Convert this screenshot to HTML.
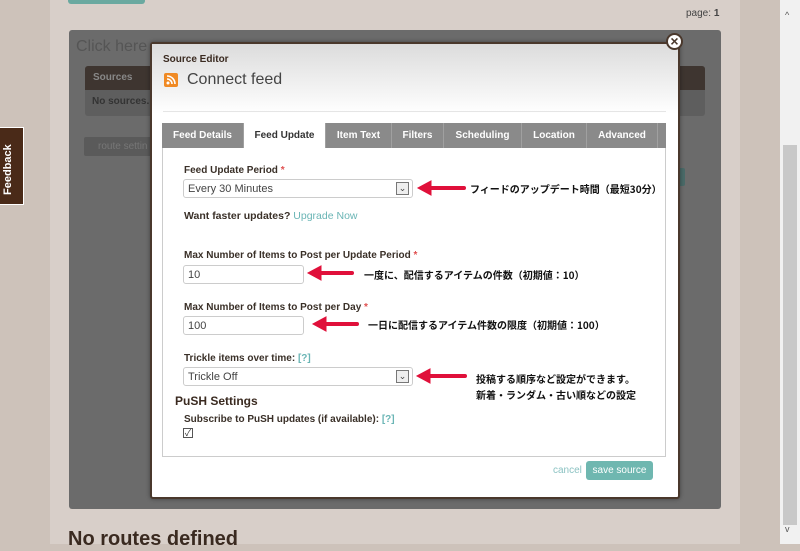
<!DOCTYPE html>
<html><head><meta charset="utf-8"><style>
*{margin:0;padding:0;box-sizing:border-box}
body{width:800px;height:544px;overflow:hidden;position:relative;background:#cdc2ba;font-family:"Liberation Sans","Noto Sans CJK JP",sans-serif;font-size:11px;color:#333}
.a{position:absolute;white-space:nowrap}
.jp{font-family:"Noto Sans CJK JP",sans-serif;font-weight:bold;font-size:10px;color:#111}
.lbl{font-weight:bold;font-size:10px;color:#3a3028}
.req{color:#e05050}
.link{color:#6ab5b5}
.inp{border:1px solid #ccc;border-radius:3px;background:#fff;font-size:11px;color:#444;padding:3px 4px;height:19px}
.dd{position:absolute;right:3px;top:2px;width:13px;height:13px;border:1px solid #777;background:#eee;font-size:9px;line-height:11px;text-align:center}
.tab{position:absolute;top:0;height:25px;line-height:25px;text-align:center;color:#fff;font-weight:bold;font-size:10px;background:#8a8a8a;border-right:1px solid #a0a0a0}
</style></head><body>
<div class="a" style="left:50px;top:0;width:690px;height:544px;background:#d8cfc9"></div>
<div class="a" style="left:780px;top:0;width:20px;height:544px;background:#f1f1f1"></div>
<div class="a" style="left:783px;top:145px;width:14px;height:380px;background:#c8c8c8"></div>
<div class="a" style="left:785px;top:10px;font-size:9px;color:#555">^</div>
<div class="a" style="left:785px;top:524px;font-size:9px;color:#555">v</div>
<div class="a" style="left:68px;top:0;width:77px;height:4px;background:#6aa9a0;border-radius:0 0 3px 3px"></div>
<div class="a" style="left:686px;top:8px;font-size:10px;color:#444">page: <b>1</b></div>
<div class="a" style="left:0;top:127px;width:24px;height:78px;background:#4a2a18;border:1px solid #fff;border-left:none"></div>
<div class="a" style="left:2px;top:195px;transform:rotate(-90deg);transform-origin:0 0;color:#fff;font-weight:bold;font-size:11px;width:70px">Feedback</div>
<div class="a" style="left:69px;top:30px;width:652px;height:479px;background:#6b6b6b;border-radius:3px"></div>
<div class="a" style="left:76px;top:38px;font-size:16px;color:#555">Click here</div>
<div class="a" style="left:85px;top:66px;width:620px;height:50px;background:#5e5e5e;border-radius:3px"></div>
<div class="a" style="left:85px;top:66px;width:620px;height:24px;background:#3e3530;border-radius:3px 3px 0 0"></div>
<div class="a" style="left:93px;top:72px;color:#888;font-weight:bold;font-size:10px">Sources</div>
<div class="a" style="left:92px;top:96px;color:#333;font-weight:bold;font-size:10px">No sources.</div>
<div class="a" style="left:84px;top:137px;width:70px;height:19px;background:#5a5a5a;border-radius:2px;color:#777;font-size:10px;padding:4px 14px;overflow:hidden">route settin</div>
<div class="a" style="left:670px;top:168px;width:15px;height:18px;background:#4a6a68;border-radius:2px"></div>
<div class="a" style="left:68px;top:528px;font-size:20px;font-weight:bold;color:#3a2a20">No routes defined</div>
<div class="a" style="left:150px;top:42px;width:530px;height:457px;background:#fff;border:2px solid #4a382c;border-radius:3px;box-shadow:0 0 4px rgba(0,0,0,.4)">
<div style="position:absolute;left:0;top:0;width:526px;height:70px;background:linear-gradient(#dcdcdc,#fff)"></div>
</div>
<div class="a" style="left:666px;top:33px;width:17px;height:17px;border-radius:50%;background:#fff;border:2px solid #4a382c;text-align:center;line-height:12px;font-weight:bold;font-size:14px;color:#4a382c">×</div>
<div class="a" style="left:163px;top:54px;font-weight:bold;font-size:10px;color:#3a2a20">Source Editor</div>
<div class="a" style="left:164px;top:73px;width:14px;height:14px;background:#f08a24;border-radius:2px"></div>
<svg class="a" style="left:164px;top:73px" width="14" height="14"><circle cx="4" cy="10" r="1.5" fill="#fff"/><path d="M3 6a5 5 0 0 1 5 5M3 3a8 8 0 0 1 8 8" stroke="#fff" stroke-width="1.6" fill="none"/></svg>
<div class="a" style="left:187px;top:71px;font-size:16px;color:#444">Connect feed</div>
<div class="a" style="left:163px;top:111px;width:503px;height:1px;background:#e5e5e5"></div>
<div class="a" style="left:162px;top:123px;width:504px;height:334px;border:1px solid #ccc;background:#fff"></div>
<div class="a" style="left:162px;top:123px;width:504px;height:25px;background:#8a8a8a">
<div class="tab" style="left:0;width:82px">Feed Details</div>
<div class="tab" style="left:82px;width:82px;background:#fff;color:#333">Feed Update</div>
<div class="tab" style="left:164px;width:66px">Item Text</div>
<div class="tab" style="left:230px;width:52px">Filters</div>
<div class="tab" style="left:282px;width:78px">Scheduling</div>
<div class="tab" style="left:360px;width:65px">Location</div>
<div class="tab" style="left:425px;width:71px">Advanced</div>
</div>
<div class="a lbl" style="left:184px;top:165px">Feed Update Period <span class="req">*</span></div>
<div class="a inp" style="left:183px;top:179px;width:230px">Every 30 Minutes<div class="dd">⌄</div></div>
<div class="a lbl" style="left:184px;top:210px;font-size:10.5px">Want faster updates? <span class="link" style="font-weight:normal">Upgrade Now</span></div>
<div class="a lbl" style="left:184px;top:250px">Max Number of Items to Post per Update Period <span class="req">*</span></div>
<div class="a inp" style="left:183px;top:265px;width:121px">10</div>
<div class="a lbl" style="left:184px;top:302px">Max Number of Items to Post per Day <span class="req">*</span></div>
<div class="a inp" style="left:183px;top:316px;width:121px">100</div>
<div class="a lbl" style="left:184px;top:353px">Trickle items over time: <span class="link">[?]</span></div>
<div class="a inp" style="left:183px;top:367px;width:230px">Trickle Off<div class="dd">⌄</div></div>
<div class="a" style="left:175px;top:394px;font-weight:bold;font-size:12px;color:#3a2a20">PuSH Settings</div>
<div class="a lbl" style="left:184px;top:414px">Subscribe to PuSH updates (if available): <span class="link">[?]</span></div>
<div class="a" style="left:183px;top:428px;width:10px;height:10px;border:1px solid #555;font-size:9px;line-height:8px;text-align:center">✓</div>
<div class="a" style="left:553px;top:465px;color:#8bc2c2;font-size:10px">cancel</div>
<div class="a" style="left:586px;top:461px;width:67px;height:19px;background:#6fb7b0;border-radius:3px;color:#fff;font-size:10px;text-align:center;line-height:19px">save source</div>
<svg class="a" style="left:0;top:0" width="800" height="544">
<g fill="#e0103a" stroke="#e0103a" stroke-linecap="round">
<path d="M428 188h36" stroke-width="4"/><path d="M418 188l13-7v14z"/>
<path d="M320 273h32" stroke-width="4"/><path d="M308 273l13-7v14z"/>
<path d="M325 324h32" stroke-width="4"/><path d="M313 324l13-7v14z"/>
<path d="M429 376h36" stroke-width="4"/><path d="M417 376l13-7v14z"/>
</g></svg>
<div class="a jp" style="left:470px;top:181px">フィードのアップデート時間（最短30分）</div>
<div class="a jp" style="left:364px;top:267px">一度に、配信するアイテムの件数（初期値：10）</div>
<div class="a jp" style="left:368px;top:317px">一日に配信するアイテム件数の限度（初期値：100）</div>
<div class="a jp" style="left:476px;top:371px">投稿する順序など設定ができます。</div>
<div class="a jp" style="left:476px;top:387px">新着・ランダム・古い順などの設定</div>
</body></html>
